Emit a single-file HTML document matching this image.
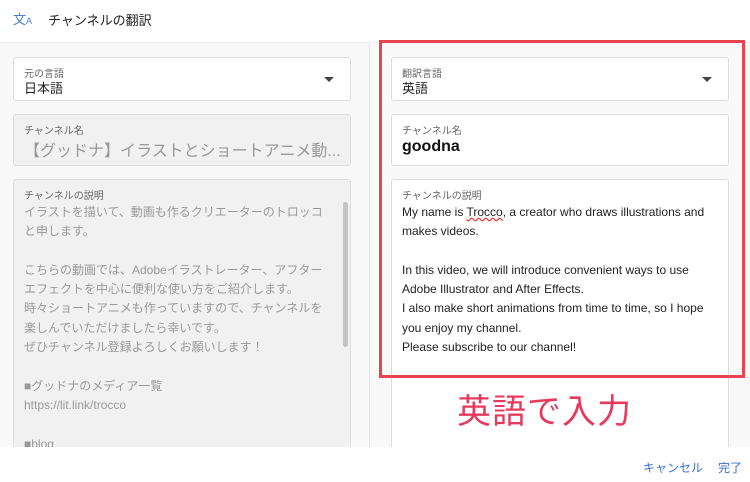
<!DOCTYPE html>
<html><head><meta charset="utf-8"><style>
*{margin:0;padding:0;box-sizing:border-box}
body{width:750px;height:482px;overflow:hidden;background:#fff;font-family:"Liberation Sans","Noto Sans CJK JP",sans-serif;position:relative}
.hdr{position:absolute;left:0;top:0;width:750px;height:43px;background:#fff;border-bottom:1px solid #eee}
.main{position:absolute;left:0;top:43px;width:750px;height:404px;background:#f9f9f9}
.div{position:absolute;left:369px;top:43px;width:1px;height:404px;background:#e4e4e4}
.box{position:absolute;border:1px solid #ddd;border-radius:3px;background:#fff;overflow:hidden}
.g{background:#f1f1f1}
.lab{position:absolute;left:10px;top:7px;font-size:10px;color:#666}
.val{position:absolute;left:10px;top:20px;font-size:13px;color:#222}
.arr{position:absolute;right:16px;top:19px;width:0;height:0;border-left:5px solid transparent;border-right:5px solid transparent;border-top:5px solid #444}
.txt{position:absolute;left:10px;top:23px;font-size:12.2px;line-height:19.3px;white-space:pre}
.foot{position:absolute;left:0;top:447px;width:750px;height:35px;background:#fff}
</style></head><body>
<div class="hdr">
<div style="position:absolute;left:13px;top:9px;font-size:13px;color:#4a7bd8">文<span style="font-size:9px">A</span></div>
<div style="position:absolute;left:48px;top:10px;font-size:13px;color:#222">チャンネルの翻訳</div>
</div>
<div class="main"></div>
<div class="div"></div>

<div class="box" style="left:13px;top:57px;width:338px;height:44px"><div class="lab">元の言語</div><div class="val">日本語</div><div class="arr"></div></div>
<div class="box g" style="left:13px;top:114px;width:338px;height:52px"><div class="lab">チャンネル名</div><div class="val" style="top:22px;font-size:16px;color:#999">【グッドナ】イラストとショートアニメ動...</div></div>
<div class="box g" style="left:13px;top:179px;width:338px;height:290px"><div class="lab">チャンネルの説明</div>
<div class="txt" style="color:#999;font-size:12px">イラストを描いて、動画も作るクリエーターのトロッコ
と申します。

こちらの動画では、Adobeイラストレーター、アフター
エフェクトを中心に便利な使い方をご紹介します。
時々ショートアニメも作っていますので、チャンネルを
楽しんでいただけましたら幸いです。
ぜひチャンネル登録よろしくお願いします！

■グッドナのメディア一覧
https://lit.link/trocco

■blog</div>
<div style="position:absolute;left:329px;top:22px;width:5px;height:145px;background:#c4c4c4;border-radius:3px"></div>
</div>

<div class="box" style="left:391px;top:57px;width:338px;height:44px"><div class="lab">翻訳言語</div><div class="val">英語</div><div class="arr"></div></div>
<div class="box" style="left:391px;top:114px;width:338px;height:52px"><div class="lab">チャンネル名</div><div class="val" style="top:23px;font-size:16px;font-weight:bold;color:#111">goodna</div></div>
<div class="box" style="left:391px;top:179px;width:338px;height:290px"><div class="lab">チャンネルの説明</div>
<div class="txt" style="color:#222;font-size:12px">My name is <span style="text-decoration:underline wavy;text-decoration-color:#e33">Trocco</span>, a creator who draws illustrations and
makes videos.

In this video, we will introduce convenient ways to use
Adobe Illustrator and After Effects.
I also make short animations from time to time, so I hope
you enjoy my channel.
Please subscribe to our channel!</div></div>

<div style="position:absolute;left:379px;top:40px;width:366px;height:338px;border:3px solid #e8434f"></div>
<div style="position:absolute;left:457px;top:384px;font-size:34px;color:#e63a5c;letter-spacing:1px">英語で入力</div>

<div class="foot">
<div style="position:absolute;left:643px;top:12px;font-size:12px;color:#3b6fd4">キャンセル</div>
<div style="position:absolute;left:718px;top:12px;font-size:12px;color:#3b6fd4">完了</div>
</div>
</body></html>
